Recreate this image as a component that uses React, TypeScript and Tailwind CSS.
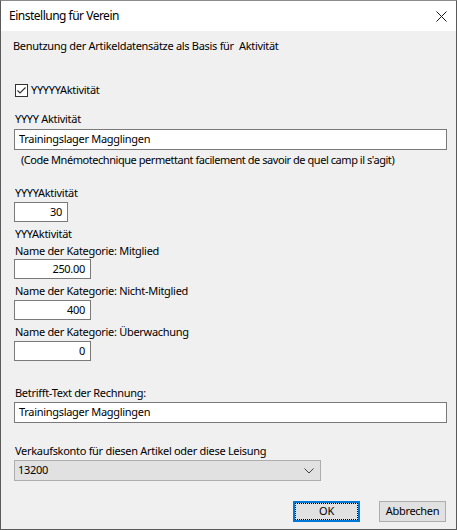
import { useState } from "react";

/* ---------- Small Win32-style controls ---------- */

function Label({ children, className = "" }: { children: React.ReactNode; className?: string }) {
  return <div className={`h-4 whitespace-pre leading-4 text-black ${className}`}>{children}</div>;
}

function NumBox({ value, width, className = "" }: { value: string; width: string; className?: string }) {
  return (
    <div
      className={`flex h-[20px] items-center justify-end border border-[#7a7a7a] bg-white pr-[5px] ${width} ${className}`}
    >
      {value}
    </div>
  );
}

function TextBox({ value, className = "" }: { value: string; className?: string }) {
  return (
    <div className={`flex h-[21px] w-[433px] items-center border border-[#7a7a7a] bg-white pl-[4px] ${className}`}>
      {value}
    </div>
  );
}

/* ========== Dialog ========== */

export default function App() {
  const [checked, setChecked] = useState(true);

  return (
    <div
      className="flex h-[530px] w-[457px] flex-col overflow-hidden border border-t-[#8c8c8c] border-x-[#5a5a5a] border-b-[#5a5a5a] bg-[#f0f0f0] text-[11px] tracking-[-0.3px] text-black"
      style={{ fontFamily: '"Noto Sans", "Open Sans", sans-serif' }}
    >
      {/* Title bar */}
      <div className="flex h-[30px] shrink-0 items-center justify-between bg-white pl-[8px] pr-[9px]">
        <span className="text-[12px] tracking-[-0.5px]">Einstellung für Verein</span>
        <svg width="11" height="11" viewBox="0 0 11 11" className="mt-[1px]">
          <path d="M0.5 0.5 L10.5 10.5 M10.5 0.5 L0.5 10.5" stroke="#1a1a1a" strokeWidth="1" />
        </svg>
      </div>

      {/* Body */}
      <div className="flex flex-col pl-[12px]">
        <Label className="mt-[7px]">Benutzung der Artikeldatensätze als Basis für  Aktivität</Label>

        <label className="mt-[28px] flex h-4 items-center gap-[3px] pl-[2px]" onClick={() => setChecked(!checked)}>
          <span className="flex h-[13px] w-[13px] items-center justify-center border border-[#333333] bg-white">
            {checked && (
              <svg width="11" height="11" viewBox="0 0 11 11">
                <path d="M1.5 5.5 L4 8 L9.5 2.5" fill="none" stroke="#333333" strokeWidth="1.2" />
              </svg>
            )}
          </span>
          <span>YYYYYAktivität</span>
        </label>

        <Label className="mt-[13px] pl-[2px]">YYYY Aktivität</Label>
        <TextBox className="mt-[2px] ml-[1px]" value="Trainingslager Magglingen" />
        <Label className="mt-[2px] pl-[8px] tracking-[-0.45px]">
          (Code Mnémotechnique permettant facilement de savoir de quel camp il s'agit)
        </Label>

        <Label className="mt-[17px] pl-[2px]">YYYYAktivität</Label>
        <NumBox className="mt-[1px] ml-[1px]" width="w-[54px]" value="30" />

        <Label className="mt-[4px] pl-[2px]">YYYAktivität</Label>
        <Label className="mt-[1px] pl-[2px]">Name der Kategorie: Mitglied</Label>
        <NumBox className="ml-[1px]" width="w-[77px]" value="250.00" />

        <Label className="mt-[4px] pl-[2px]">Name der Kategorie: Nicht-Mitglied</Label>
        <NumBox className="mt-[1px] ml-[1px]" width="w-[77px]" value="400" />

        <Label className="mt-[4px] pl-[2px]">Name der Kategorie: Überwachung</Label>
        <NumBox className="mt-[1px] ml-[1px]" width="w-[77px]" value="0" />

        <Label className="mt-[24px] pl-[2px]">Betrifft-Text der Rechnung:</Label>
        <TextBox className="mt-[1px] ml-[1px]" value="Trainingslager Magglingen" />

        <Label className="mt-[20px] pl-[2px]">Verkaufskonto für diesen Artikel oder diese Leisung</Label>
        <div className="mt-[1px] ml-[1px] flex h-[21px] w-[307px] items-center justify-between border border-[#adadad] bg-[#e1e1e1] pl-[3px] pr-[6px]">
          <span>13200</span>
          <svg width="10" height="6" viewBox="0 0 10 6">
            <path d="M0.5 0.5 L5 5 L9.5 0.5" fill="none" stroke="#404040" strokeWidth="1" />
          </svg>
        </div>

        {/* Buttons */}
        <div className="mt-[20px] flex justify-end gap-[19px] pr-[10px]">
          <button className="flex h-[21px] w-[67px] items-center justify-center border-2 border-[#0078d7] bg-[#e1e1e1] p-0">
            <span className="flex h-full w-full items-center justify-center border border-dotted border-black">OK</span>
          </button>
          <button className="flex h-[21px] w-[67px] items-center justify-center border border-[#adadad] bg-[#e1e1e1]">
            Abbrechen
          </button>
        </div>
      </div>
    </div>
  );
}
